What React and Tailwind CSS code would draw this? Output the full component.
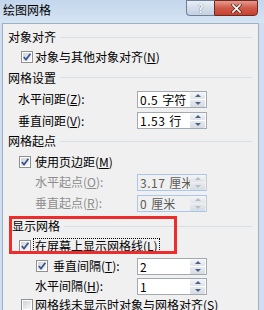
import React from "react";

function Check({ checked = true }) {
  return (
    <span className="relative flex h-[12px] w-[12px] shrink-0 items-center justify-center border border-[#8e8f8f] bg-white">
      <span className="absolute inset-[1px] bg-gradient-to-br from-[#cfd3d8] to-[#f7f8f9]" />
      {checked && (
        <svg viewBox="0 0 10 10" className="relative h-[10px] w-[10px]">
          <path d="M1.8 5 L4 7.6 L8.4 1.8" fill="none" stroke="#3d5591" strokeWidth="1.8" />
        </svg>
      )}
    </span>
  );
}

function Group({ title }) {
  return (
    <div className="flex h-full items-center pl-[5px] pr-[6px]">
      <span>{title}</span>
      <span className="ml-[4px] h-px flex-1 bg-[#d5dfe5]" />
    </div>
  );
}

function Spin({ num, unit, disabled = false }) {
  return (
    <div
      className={
        disabled
          ? "flex h-[17px] w-[70px] items-center border border-[#a9c7ec] border-r-[#c9c9c9] bg-[#f0f0f0] text-[#5b5b5b]"
          : "flex h-[17px] w-[70px] items-center border border-[#a3a9b1] bg-white text-black"
      }
    >
      <span className="h-[15px] min-w-0 flex-1 overflow-hidden whitespace-nowrap pl-[2px] leading-[15px]">
        <span className="tracking-[0.5px]">{num}</span>
        {unit && <span className="ml-[4px]">{unit}</span>}
      </span>
      <div className="mr-[1px] flex h-[15px] w-[15px] shrink-0 flex-col gap-px">
        <span className="flex flex-1 items-center justify-center rounded-[1px] bg-gradient-to-b from-[#f4f6f9] to-[#dfe4ea]">
          <svg viewBox="0 0 6 3" className="h-[3px] w-[6px]">
            <path d="M0 3 L3 0 L6 3 Z" fill={disabled ? "#b9bdc3" : "#4c6085"} />
          </svg>
        </span>
        <span className="flex flex-1 items-center justify-center rounded-[1px] bg-gradient-to-b from-[#e6eaef] to-[#d6dce4]">
          <svg viewBox="0 0 6 3" className="h-[3px] w-[6px]">
            <path d="M0 0 L3 3 L6 0 Z" fill={disabled ? "#b9bdc3" : "#4c6085"} />
          </svg>
        </span>
      </div>
    </div>
  );
}

function SpinRow({ h, pl, label, num, unit, disabled }) {
  return (
    <div className={`flex items-center ${h}`}>
      <div className={`w-[134px] shrink-0 whitespace-nowrap ${pl} ${disabled ? "text-[#8d8d8d]" : ""}`}>
        {label}
      </div>
      <Spin num={num} unit={unit} disabled={disabled} />
    </div>
  );
}

export default function App() {
  return (
    <div className="relative h-[310px] w-[264px] overflow-hidden bg-[#cfdef0] font-['Noto_Sans_CJK_SC','Noto_Sans',sans-serif] text-[12px] text-black">
      {/* title bar */}
      <div className="flex h-[23px] items-start bg-gradient-to-b from-[#c3d6ec] to-[#d6e4f3]">
        <span className="pl-[3px] pt-[2px] leading-[16px]">绘图网格</span>
        <div className="ml-auto mr-[6px] flex">
          <div className="flex h-[16px] w-[28px] items-center justify-center rounded-bl-[4px] border border-r-0 border-[#6e7f96] bg-gradient-to-b from-[#e9eff6] via-[#d3deeb] to-[#c2d1e3] text-[11px] font-bold leading-none text-white [text-shadow:0_0_1px_#2f3e55]">
            ?
          </div>
          <div className="flex h-[16px] w-[44px] items-center justify-center rounded-br-[4px] border border-[#6a2a24] bg-gradient-to-b from-[#e59b8f] via-[#cf5a49] to-[#c8402e]">
            <svg viewBox="0 0 12 10" className="h-[9px] w-[11px]">
              <path d="M2 1 L10 9 M10 1 L2 9" stroke="#3b1410" strokeWidth="3.2" strokeLinecap="square" />
              <path d="M2 1 L10 9 M10 1 L2 9" stroke="#ffffff" strokeWidth="1.8" strokeLinecap="square" />
            </svg>
          </div>
        </div>
      </div>

      {/* client panel */}
      <div className="ml-[2px] h-[300px] w-[257px] border border-b-0 border-[#9fb0c5] bg-[#f0f0f0] pt-[4px]">
        <div className="h-[18px]">
          <Group title="对象对齐" />
        </div>
        <div className="flex h-[21px] items-center pl-[18px]">
          <Check />
          <span className="ml-[2px]">
            对象与其他对象对齐(<u>N</u>)
          </span>
        </div>
        <div className="h-[21px]">
          <Group title="网格设置" />
        </div>
        <SpinRow h="h-[22px]" pl="pl-[15px]" label={<>水平间距(<u>Z</u>):</>} num="0.5" unit="字符" />
        <SpinRow h="h-[21px]" pl="pl-[15px]" label={<>垂直间距(<u>V</u>):</>} num="1.53" unit="行" />
        <div className="h-[20px]">
          <Group title="网格起点" />
        </div>
        <div className="flex h-[21px] items-center pl-[16px]">
          <Check />
          <span className="ml-[4px]">
            使用页边距(<u>M</u>)
          </span>
        </div>
        <SpinRow h="h-[20px]" pl="pl-[32px]" label={<>水平起点(<u>O</u>):</>} num="3.17" unit="厘米" disabled />
        <SpinRow h="h-[22px]" pl="pl-[32px]" label={<>垂直起点(<u>R</u>):</>} num="0" unit="厘米" disabled />
        <div className="h-[22px] pt-[2px]">
          <div className="flex h-full items-center pl-[9px] pr-[6px]">
            <span>显示网格</span>
            <span className="ml-[4px] h-px flex-1 bg-[#d5dfe5]" />
          </div>
        </div>
        <div className="flex h-[20px] items-center pl-[16px]">
          <Check />
          <span className="ml-[2px] border border-dotted border-black px-px leading-[14px]">
            在屏幕上显示网格线(<u>L</u>)
          </span>
        </div>
        <div className="flex h-[20px] items-center">
          <div className="flex w-[134px] shrink-0 items-center pl-[33px]">
            <Check />
            <span className="ml-[5px]">
              垂直间隔(<u>T</u>):
            </span>
          </div>
          <Spin num="2" />
        </div>
        <SpinRow h="h-[20px]" pl="pl-[32px]" label={<>水平间隔(<u>H</u>):</>} num="1" />
        <div className="flex h-[18px] items-center pl-[18px]">
          <Check checked={false} />
          <span className="ml-[2px] whitespace-nowrap">
            网格线未显示时对象与网格对齐(<u>S</u>)
          </span>
        </div>
      </div>

      {/* annotation box */}
      <div className="pointer-events-none absolute left-[9px] top-[216px] h-[38px] w-[168px] border-[3px] border-[#ee2c2c]" />
    </div>
  );
}
